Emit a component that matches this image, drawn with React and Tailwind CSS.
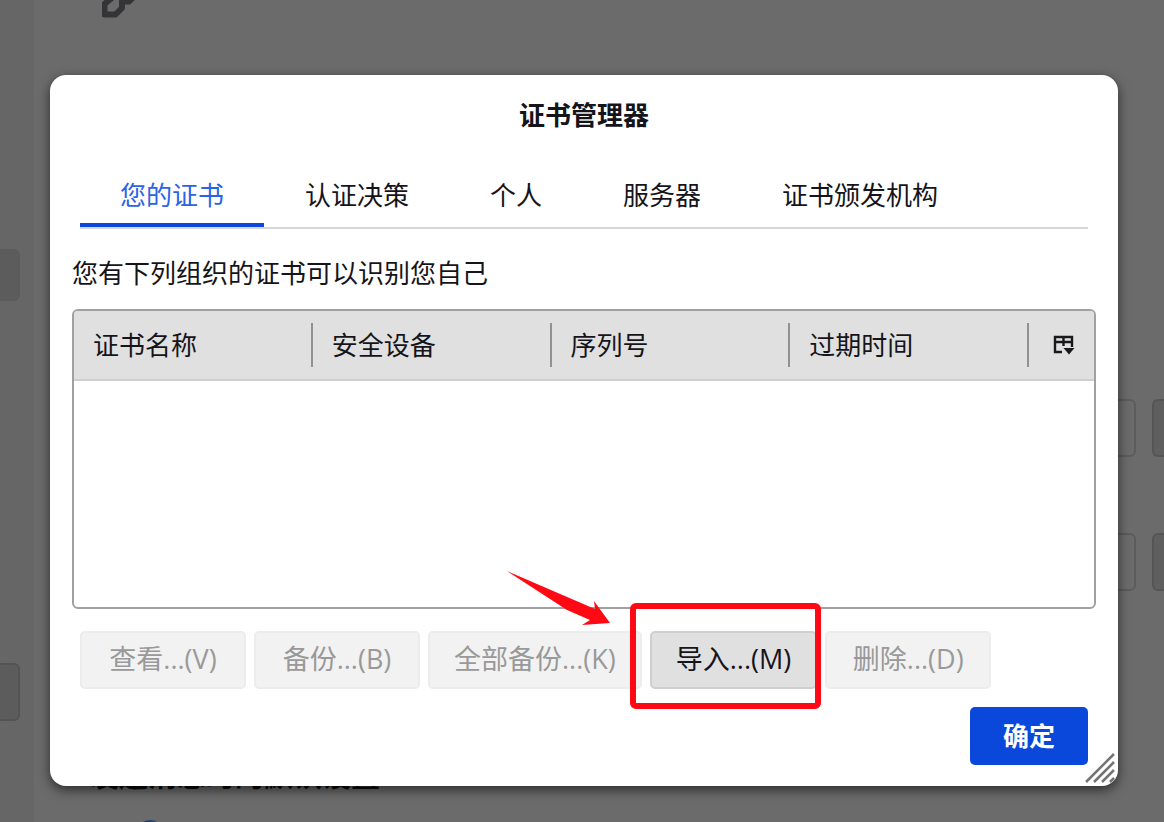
import React from "react";

const tabs = ["您的证书", "认证决策", "个人", "服务器", "证书颁发机构"];
const columns = ["证书名称", "安全设备", "序列号", "过期时间"];
const actionClass =
  "h-[58px] min-w-[166px] rounded-[5px] border-2 px-6 pb-0.5 text-[27px] whitespace-nowrap disabled:border-[#ececec] disabled:bg-[#f2f2f2] disabled:text-[#999999]";

function Backdrop() {
  return (
    <div className="flex h-full">
      <aside className="flex w-[34px] shrink-0 flex-col bg-[#666666] pt-[249px]">
        <a href="#account" aria-label="account" className="h-[52px] w-5 rounded-r-md bg-[#5c5c5c]" />
        <button
          type="button"
          aria-label="account actions"
          className="mt-[362px] h-[58px] w-5 rounded-r-md border-2 border-l-0 border-[#535353] bg-[#5c5c5c]"
        />
      </aside>
      <main className="flex min-w-0 flex-1 flex-col pl-14">
        <svg className="ml-3 h-5 w-10 shrink-0" viewBox="0 0 40 20" fill="none">
          <path d="M11-3 2.500 4v10.500h11L20 8V3" stroke="#343436" strokeWidth="6" strokeLinejoin="round" />
          <path d="M17 4.500h11L36-3H17Z" fill="#343436" />
        </svg>
        <div className="mt-[379px] flex justify-end gap-4">
          <input aria-label="incoming" className="h-[58px] w-[400px] rounded-md border-2 border-[#5c5c5c]" />
          <button type="button" aria-label="choose incoming" className="h-[58px] w-3 rounded-l-md border-2 border-r-0 border-[#555555] bg-[#5f5f5f]" />
        </div>
        <div className="mt-[76px] flex justify-end gap-4">
          <input aria-label="outgoing" className="h-[58px] w-[400px] rounded-md border-2 border-[#5c5c5c]" />
          <button type="button" aria-label="choose outgoing" className="h-[58px] w-3 rounded-l-md border-2 border-r-0 border-[#555555] bg-[#5f5f5f]" />
        </div>
        <h2 className="mt-[165px] shrink-0 text-[29px] leading-[40px] font-bold text-[#0c0c0e]">发送消息时的默认设置</h2>
        <input
          type="radio"
          aria-label="default"
          defaultChecked
          className="mt-[24px] ml-[47px] size-[26px] shrink-0 appearance-none rounded-full border-4 border-[#24406f]"
        />
      </main>
    </div>
  );
}

function ColumnPickerIcon() {
  return (
    <svg className="h-5 w-[22px]" viewBox="0 0 22 20" fill="none" stroke="#19191d" strokeWidth="2.400">
      <path d="M9 17H2V2h17v10M2 7h17M10.500 2v9" />
      <path d="M10.500 13h11L16 19.500Z" fill="#19191d" stroke="none" />
    </svg>
  );
}

export default function App() {
  return (
    <div className="relative h-screen overflow-hidden bg-[#6b6b6b] font-['Open_Sans','Noto_Sans_CJK_SC',sans-serif] text-[26px] leading-[40px] text-[#15141a]">
      <Backdrop />
      <div className="absolute inset-x-0 top-0 pt-[75px] pr-[46px] pl-[50px]">
        <section
          role="dialog"
          aria-labelledby="dialog-title"
          className="relative rounded-2xl bg-white px-[22px] pt-5 pb-[21px] shadow-[0_4px_12px_rgba(0,0,0,0.6)]"
        >
          <h1 id="dialog-title" className="text-center font-bold">证书管理器</h1>

          <div role="tablist" className="mx-2 mt-[30px] flex gap-px border-b-2 border-[#d5d5da]">
            {tabs.map((tab, i) => (
              <button
                key={tab}
                type="button"
                role="tab"
                aria-selected={i === 0}
                className="h-[62px] border-b-4 border-transparent px-10 pt-0.5 whitespace-nowrap aria-selected:border-[#0a48db] aria-selected:text-[#2a63e6]"
              >
                {tab}
              </button>
            ))}
          </div>

          <p className="mt-6">您有下列组织的证书可以识别您自己</p>

          <div className="mt-4 h-[300px] overflow-hidden rounded-md border-2 border-[#a0a0a0]">
            <table className="w-full table-fixed border-collapse">
              <thead>
                <tr className="h-[69px] border-b-2 border-[#cfcfd2] bg-[#e0e0e0]">
                  {columns.map((column) => (
                    <th key={column} scope="col" className="p-0 text-left font-normal">
                      <div className="flex h-11 items-center border-r-2 border-[#919195] pl-[19px]">{column}</div>
                    </th>
                  ))}
                  <th scope="col" className="w-[65px] p-0">
                    <button type="button" aria-label="columns" className="flex w-full justify-center pl-1">
                      <ColumnPickerIcon />
                    </button>
                  </th>
                </tr>
              </thead>
              <tbody />
            </table>
          </div>

          <div className="mx-2 mt-[22px] flex gap-2">
            <button type="button" disabled className={actionClass}>查看...(V)</button>
            <button type="button" disabled className={actionClass}>备份...(B)</button>
            <button type="button" disabled className={actionClass}>全部备份...(K)</button>
            <div className="relative">
              <button type="button" className={`${actionClass} border-[#cfcfcf] bg-[#e0e0e0]`}>导入...(M)</button>
              <span className="pointer-events-none absolute -top-7 -right-1 -bottom-5 -left-5 rounded-md border-6 border-[#ff0a14]" />
              <svg className="pointer-events-none absolute -top-[60px] -left-[143px] h-[56px] w-[104px]" viewBox="0 0 104 56" fill="#ff0a14">
                <path d="M0 0 88 38 87 30 103 52 75 54 83 49 60 39Z" />
              </svg>
            </div>
            <button type="button" disabled className={actionClass}>删除...(D)</button>
          </div>

          <div className="mx-2 mt-[18px] flex justify-end">
            <button type="button" className="h-[58px] rounded-[5px] bg-[#0a48db] px-[33px] font-bold text-white">确定</button>
          </div>

          <svg className="absolute right-0.5 bottom-0.5 size-8" viewBox="0 0 32 32" stroke="#747474" strokeWidth="2.500" fill="none">
            <path d="M2 30 30 2M10 30 30 10M18 30 30 18M26 30 30 26" />
          </svg>
        </section>
      </div>
    </div>
  );
}
